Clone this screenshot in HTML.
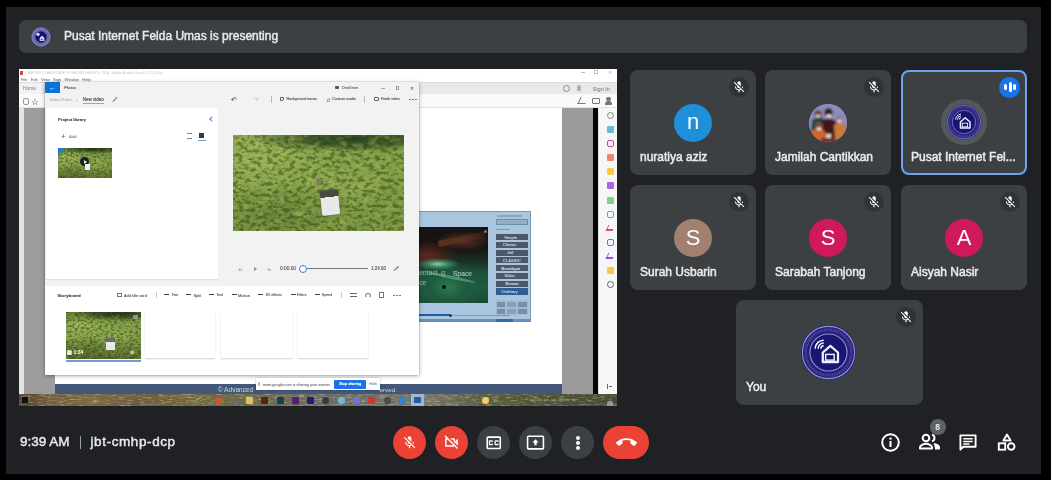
<!DOCTYPE html>
<html><head><meta charset="utf-8">
<style>
*{box-sizing:border-box;margin:0;padding:0}
html,body{width:1051px;height:480px;overflow:hidden;background:#000;font-family:"Liberation Sans",sans-serif}
body{filter:blur(0.4px)}
.abs{position:absolute}
#main{position:absolute;left:6px;top:7px;width:1035px;height:467px;background:#202124}
#banner{left:19px;top:20px;width:1008px;height:32.5px;background:#3c4043;border-radius:7px}
#banner .txt{left:64px;top:29px;color:#e8eaed;font-size:12px;font-weight:bold;letter-spacing:-0.38px;white-space:nowrap}
.tile{position:absolute;background:#3c4043;border-radius:8px;width:126px;height:105px}
.tile .nm{position:absolute;left:10px;top:80px;color:#e8eaed;font-size:12px;-webkit-text-stroke:0.5px #e8eaed;white-space:nowrap}
.tile .mute{position:absolute;right:7px;top:7px;width:20px;height:20px;border-radius:50%;background:#303336}.tile .mute svg{position:absolute;left:2.6px;top:3px}.btn .ic{position:absolute}
.av{position:absolute;left:44px;top:34px;width:38px;height:38px;border-radius:50%;color:#fff;font-size:22px;text-align:center;line-height:36px}
#share{left:19px;top:69px;width:598px;height:337px;background:#fff;overflow:hidden}
.btn{position:absolute;top:426px;width:33px;height:33px;border-radius:50%}
.vid{background:radial-gradient(ellipse 60% 14% at 70% 4%,#2a4220 0,rgba(42,66,32,.7) 50%,transparent 100%),radial-gradient(ellipse 45% 40% at 15% 25%,#9cb45a 0,transparent 100%),radial-gradient(ellipse 30% 25% at 65% 50%,#90aa50 0,transparent 100%),radial-gradient(ellipse 40% 35% at 25% 85%,#6a8638 0,transparent 100%),linear-gradient(170deg,#82a046 0,#86a24a 40%,#7a9642 100%)}
.card{background:#fff;box-shadow:0 1px 1.5px rgba(0,0,0,.18)}
.t{position:absolute;white-space:nowrap;line-height:1;-webkit-text-stroke:0.12px}
</style></head><body>
<div id="main"></div>
<div id="banner" class="abs">
</div>
<div class="abs" style="left:31px;top:26.5px"><svg viewBox="-30 -30 60 60" width="20" height="20"><circle r="29" fill="#6a68a8"/><circle r="26" fill="none" stroke="#a09ed4" stroke-width="4" stroke-dasharray="2 1.5" opacity=".6"/><circle r="17" fill="#15106a"/><path d="M-4 12V2l7-6 7 6v10z" fill="#d8d8f0"/><rect x="-1" y="5" width="7" height="5" fill="#6a68a8"/><circle cx="-9" cy="-8" r="5" fill="#e0e0f4"/></svg></div>
<div class="abs" style="left:64px;top:29px;color:#e8eaed;font-size:12px;letter-spacing:0px;-webkit-text-stroke:0.45px #e8eaed;white-space:nowrap">Pusat Internet Felda Umas is presenting</div>

<div id="share" class="abs"><div class="abs" style="left:-19px;top:-69px;width:1051px;height:480px">
<div class="abs" style="left:19px;top:69px;width:598px;height:13px;background:#fff"></div>
<div class="abs" style="left:19.5px;top:71px;width:3px;height:3.5px;background:#e0493a"></div>
<div class="t" style="left:25.4px;top:72.08px;font-size:3.3px;color:#c4c4c4;-webkit-text-stroke:0">CHAPTER 1 LANDSCAPE OF NATURE HEIGHTS - M.A. - Adobe Acrobat Reader DC (32-bit)</div>
<div class="t" style="left:20.8px;top:77.98px;font-size:4.05px;color:#8a8a8a;">File &nbsp; Edit &nbsp; View &nbsp; Sign &nbsp; Window &nbsp; Help</div>
<div class="abs" style="left:580.5px;top:72px;width:4px;height:0.8px;background:#c0c0c0"></div>
<div class="abs" style="left:594px;top:70px;width:4px;height:4px;border:1px solid #c0c0c0"></div>
<div class="t" style="left:608px;top:70.8px;font-size:4.5px;color:#c0c0c0;">&#10005;</div>
<div class="abs" style="left:19px;top:82px;width:598px;height:12px;background:#e9e9e9;border-top:1px solid #dcdcdc"></div>
<div class="abs" style="left:19px;top:82.5px;width:23px;height:11.5px;background:#f2f2f2"></div>
<div class="t" style="left:23px;top:86.65px;font-size:4.87px;color:#9a9a9a;">Home</div>
<div class="abs" style="left:562.5px;top:84.5px;width:7px;height:7px;border:1px solid #8a8a8a;border-radius:50%"></div>
<div class="abs" style="left:577px;top:85px;width:4px;height:6px;background:#b0b0b0;border-radius:2px 2px 1px 1px"></div>
<div class="t" style="left:592.6px;top:86.56px;font-size:5.59px;color:#8a8a8a;">Sign In</div>
<div class="abs" style="left:19px;top:94px;width:598px;height:14px;background:#fafafa;border-bottom:1px solid #e3e3e3"></div>
<div class="abs" style="left:22.5px;top:97.5px;width:6px;height:7px;border:1px solid #999;border-radius:2px"></div>
<div class="t" style="left:31px;top:98.0px;font-size:8.5px;color:#777;">&#9734;</div>
<div class="abs" style="left:579px;top:97px;width:8px;height:7px;border-bottom:1.3px solid #777;border-left:1.3px solid #777;transform:skewX(-25deg)"></div>
<div class="abs" style="left:592px;top:97.5px;width:8px;height:6.5px;border:1.2px solid #777;border-radius:1px"></div>
<div class="abs" style="left:606px;top:96.5px;width:4.5px;height:4.5px;background:#777;border-radius:50%"></div>
<div class="abs" style="left:604.5px;top:101px;width:7.5px;height:4px;background:#777;border-radius:3px 3px 0 0"></div>
<div class="abs" style="left:19px;top:108px;width:4.5px;height:286px;background:#e4e4e4"></div>
<div class="abs" style="left:23.5px;top:108px;width:31px;height:286px;background:#9d9d9d"></div>
<div class="abs" style="left:54.5px;top:108px;width:507px;height:286px;background:#fff"></div>
<div class="abs" style="left:561.5px;top:108px;width:31px;height:286px;background:#9b9b9b"></div>
<div class="abs" style="left:592.5px;top:108px;width:5px;height:286px;background:#050505"></div>
<div class="abs" style="left:597.5px;top:108px;width:20px;height:286px;background:#f6f6f6"></div>
<div class="abs" style="left:606.5px;top:111.5px;width:7px;height:7px;border:1.3px solid #888;border-radius:50%"></div>
<div class="abs" style="left:606.5px;top:125.5px;width:7px;height:7px;background:#4fb3c9;border-radius:1px;opacity:.85"></div>
<div class="abs" style="left:606.5px;top:139.5px;width:7px;height:7px;border:1.6px solid #d83da0;border-radius:2px"></div>
<div class="abs" style="left:606.5px;top:153.5px;width:7px;height:7px;background:#e8735a;border-radius:1px;opacity:.85"></div>
<div class="abs" style="left:606.5px;top:168.0px;width:7px;height:7px;background:#f2c42c;border-radius:1px;opacity:.85"></div>
<div class="abs" style="left:606.5px;top:182.0px;width:7px;height:7px;background:#9a4fe0;border-radius:1px;opacity:.85"></div>
<div class="abs" style="left:606.5px;top:196.5px;width:7px;height:7px;background:#6ccc6c;border-radius:1px;opacity:.85"></div>
<div class="abs" style="left:606.5px;top:210.5px;width:7px;height:7px;border:1.6px solid #3fb6c6;border-radius:2px"></div>
<div class="abs" style="left:606.5px;top:225px;width:7px;height:6px;border-bottom:2px solid #e04a8a;border-left:1.6px solid #e04a8a;transform:skewX(-25deg)"></div>
<div class="abs" style="left:606.5px;top:238.5px;width:7px;height:7px;border:1.6px solid #7a6ae8;border-radius:2px"></div>
<div class="abs" style="left:606.5px;top:253px;width:7px;height:6px;border-bottom:2px solid #a04ae8;border-left:1.6px solid #a04ae8;transform:skewX(-25deg)"></div>
<div class="abs" style="left:606.5px;top:266.5px;width:7px;height:7px;background:#f2c42c;border-radius:1px;opacity:.85"></div>
<div class="abs" style="left:606.5px;top:280.5px;width:7px;height:7px;border:1.3px solid #666;border-radius:50%"></div>
<div class="abs" style="left:607px;top:384px;width:1px;height:5px;background:#666"></div>
<div class="abs" style="left:609px;top:386px;width:3px;height:1px;background:#666"></div>
<div class="abs" style="left:597.5px;top:108px;width:1px;height:286px;background:#e6e6e6"></div>
<div class="abs" style="left:418px;top:211px;width:113px;height:111px;background:#a9c6de;border:1px solid #7a98b0"></div>
<div class="abs" style="left:418px;top:227px;width:70px;height:76px;background:radial-gradient(ellipse 22px 6px at 20px 37px,rgba(150,240,190,.85) 0,rgba(80,190,130,.5) 50%,transparent 100%),radial-gradient(ellipse 30px 14px at 10px 28px,rgba(110,40,30,.8) 0,transparent 100%),radial-gradient(ellipse 36px 26px at 30px 60px,#2a7a52 0,#1f5a40 50%,transparent 100%),radial-gradient(ellipse 28px 10px at 45px 14px,#5a2e22 0,transparent 100%),linear-gradient(#141414 0,#181614 30%,#1a3026 45%,#1f5038 60%,#1e5a3e 80%,#1c4a34 100%)"></div>
<div class="abs" style="left:438px;top:236px;width:48px;height:6px;background:linear-gradient(90deg,rgba(110,60,30,.7),rgba(90,40,25,.3));transform:rotate(-12deg)"></div>
<div class="abs" style="left:428px;top:276px;width:48px;height:3px;background:rgba(120,210,160,.45);border-radius:50%;transform:rotate(12deg)"></div>
<div class="t" style="left:419px;top:270.45px;font-size:6.88px;color:#8fb0a8;">entacl..g</div>
<div class="t" style="left:453px;top:270.52px;font-size:6.7px;color:#a9c4c4;">Space</div>
<div class="t" style="left:419.5px;top:279.95px;font-size:6.63px;color:#90a8a6;">ce</div>
<div class="abs" style="left:484px;top:230px;width:3px;height:3px;background:#777;border-radius:50%"></div>
<div class="abs" style="left:442px;top:285px;width:4px;height:4px;background:#111;border-radius:50%"></div>
<div class="abs" style="left:496px;top:233.5px;width:32px;height:62px;background:repeating-linear-gradient(#4c5966 0 6.2px,#a9c6de 6.2px 7.75px)"></div>
<div class="abs" style="left:496px;top:288px;width:32px;height:7px;background:#2e5e96"></div>
<div class="t" style="left:504.2px;top:235.52px;font-size:4.2px;color:#c8d4de;">Simple</div>
<div class="t" style="left:502.9px;top:243.27px;font-size:4.2px;color:#c8d4de;">Classic</div>
<div class="t" style="left:506.8px;top:251.02px;font-size:4.2px;color:#c8d4de;">Jeff</div>
<div class="t" style="left:502.9px;top:258.77px;font-size:4.2px;color:#c8d4de;">CLASSIC</div>
<div class="t" style="left:501.6px;top:266.52px;font-size:4.2px;color:#c8d4de;font-weight:bold">Bowtique</div>
<div class="t" style="left:504.2px;top:274.27px;font-size:4.2px;color:#c8d4de;">Slider</div>
<div class="t" style="left:505.5px;top:282.02px;font-size:4.2px;color:#c8d4de;font-weight:bold">Brown</div>
<div class="t" style="left:501.6px;top:289.77px;font-size:4.2px;color:#c8d4de;">Ordinary</div>
<div class="abs" style="left:497px;top:215px;width:25px;height:1.5px;background:#8aa6be"></div>
<div class="abs" style="left:496px;top:219px;width:32px;height:6px;background:#8fb0c8;border:1px solid #6f8fa6"></div>
<div class="abs" style="left:496px;top:228.5px;width:14px;height:1.5px;background:#7f98ac"></div>
<div class="abs" style="left:496px;top:300px;width:32px;height:15px;background:#a0bcd4"></div>
<div class="abs" style="left:497px;top:302px;width:8px;height:5px;background:#7890a4"></div>
<div class="abs" style="left:507px;top:302px;width:9px;height:5px;background:#8aa0b4"></div>
<div class="abs" style="left:518px;top:302px;width:9px;height:5px;background:#7890a4"></div>
<div class="abs" style="left:497px;top:309px;width:8px;height:5px;background:#7890a4"></div>
<div class="abs" style="left:507px;top:309px;width:9px;height:5px;background:#8aa0b4"></div>
<div class="abs" style="left:518px;top:309px;width:9px;height:5px;background:#7890a4"></div>
<div class="abs" style="left:418px;top:314.5px;width:92px;height:1px;background:#7f98b0"></div>
<div class="abs" style="left:418px;top:314px;width:32px;height:2px;background:#1f5aa8"></div>
<div class="abs" style="left:449px;top:314px;width:3px;height:3px;background:#1a3a6a;border-radius:50%"></div>
<div class="abs" style="left:418px;top:318.5px;width:113px;height:3.5px;background:#6a8fbd"></div>
<div class="abs" style="left:496px;top:318.5px;width:17px;height:3.5px;background:#2e6ab0"></div>
<div class="abs" style="left:45px;top:82px;width:374px;height:293px;background:#f2f2f2;box-shadow:0 1px 4px rgba(0,0,0,.35),0 0 1px rgba(0,0,0,.3)"></div>
<div class="abs" style="left:45px;top:82px;width:15px;height:10.5px;background:#0a74d6"></div>
<div class="t" style="left:49.5px;top:85.4px;font-size:6px;color:#fff;">&#8592;</div>
<div class="t" style="left:64.3px;top:87.06px;font-size:3.85px;color:#555;">Photos</div>
<div class="abs" style="left:335px;top:85.7px;width:4px;height:3.5px;background:#555;border-radius:1px"></div>
<div class="t" style="left:341.8px;top:86.66px;font-size:3.84px;color:#666;">OneDrive</div>
<div class="abs" style="left:381px;top:88px;width:4px;height:0.8px;background:#aaa"></div>
<div class="abs" style="left:395.5px;top:86px;width:3.5px;height:3.5px;border:0.8px solid #999"></div>
<div class="t" style="left:410px;top:86.4px;font-size:5px;color:#666;">&#10005;</div>
<div class="t" style="left:49.5px;top:97.88px;font-size:4.29px;color:#b8b8b8;">Video Editor</div>
<div class="t" style="left:76px;top:97.2px;font-size:6px;color:#bbb;">&#8250;</div>
<div class="t" style="left:82.8px;top:97.81px;font-size:4.48px;color:#444;">New video</div>
<div class="abs" style="left:83px;top:102.8px;width:21px;height:1px;background:#7ab0e0"></div>
<div class="abs" style="left:112px;top:98.5px;width:6px;height:1.3px;background:#777;transform:rotate(-45deg)"></div>
<div class="t" style="left:231px;top:96.2px;font-size:7px;color:#555;">&#8630;</div>
<div class="t" style="left:252.5px;top:96.2px;font-size:7px;color:#c8c8c8;">&#8631;</div>
<div class="abs" style="left:270.5px;top:95.5px;width:0.8px;height:7px;background:#b5b5b5"></div>
<div class="abs" style="left:279.5px;top:96.8px;width:4px;height:4px;border:1px solid #666;border-radius:0 0 50% 0"></div>
<div class="t" style="left:286.6px;top:97.92px;font-size:3.7px;color:#555;">Background music</div>
<div class="t" style="left:326px;top:97.0px;font-size:6px;color:#666;">&#9835;</div>
<div class="t" style="left:332.3px;top:97.86px;font-size:3.84px;color:#555;">Custom audio</div>
<div class="abs" style="left:364.2px;top:95.5px;width:0.8px;height:7px;background:#b5b5b5"></div>
<div class="abs" style="left:373.5px;top:96.8px;width:5px;height:4px;border:1px solid #666;border-radius:1px"></div>
<div class="t" style="left:380.8px;top:97.98px;font-size:3.56px;color:#555;">Finish video</div>
<div class="abs" style="left:409px;top:98.5px;width:10px;height:1.4px;background:repeating-linear-gradient(90deg,#777 0 1.6px,transparent 1.6px 3.2px)"></div>
<div class="abs" style="left:46px;top:108px;width:172px;height:171px;background:#fff;box-shadow:0 1px 1px rgba(0,0,0,.07)"></div>
<div class="t" style="left:58px;top:117.93px;font-size:4.18px;color:#444;font-weight:bold">Project library</div>
<div class="abs" style="left:210px;top:117px;width:4px;height:4px;border-left:1px solid #4a90d0;border-bottom:1px solid #4a90d0;transform:rotate(45deg)"></div>
<div class="t" style="left:61px;top:133.2px;font-size:8px;color:#666;">+</div>
<div class="t" style="left:69px;top:135.41px;font-size:4.22px;color:#888;">Add</div>
<div class="abs" style="left:187px;top:133px;width:5px;height:6px;border-top:1px solid #888;border-bottom:1px solid #888;background:linear-gradient(#fff 40%,#888 40% 60%,#fff 60%)"></div>
<div class="abs" style="left:199px;top:132.5px;width:5px;height:5px;background:#3a3a3a"></div>
<div class="abs" style="left:198px;top:140px;width:8px;height:1px;background:#6aa6da"></div>
<div class="abs vid" style="left:58px;top:148px;width:53.5px;height:30px;overflow:hidden"><svg width="53.5" height="30" style="position:absolute;left:0;top:0"><filter id="tg1" x="0" y="0" width="100%" height="100%" color-interpolation-filters="sRGB"><feTurbulence type="fractalNoise" baseFrequency="0.21 0.315" numOctaves="2" seed="9"/><feColorMatrix type="matrix" values="0 0 0 0 0.68  0 0 0 0 0.74  0 0 0 0 0.36  3 0 0 0 -1.5"/></filter><rect width="100%" height="100%" filter="url(#tg1)" opacity=".55"/><filter id="tf1" x="0" y="0" width="100%" height="100%" color-interpolation-filters="sRGB"><feTurbulence type="fractalNoise" baseFrequency="0.385 0.595" numOctaves="3" seed="4"/><feColorMatrix type="matrix" values="0 0 0 0 0.16  0 0 0 0 0.25  0 0 0 0 0.07  -4.5 0 0 0 2.45"/></filter><rect width="100%" height="100%" filter="url(#tf1)" opacity=".5"/></svg></div>
<div class="abs" style="left:58px;top:148px;width:53.5px;height:30px;background:linear-gradient(rgba(20,30,10,.3),rgba(0,0,0,0) 30%,rgba(0,0,0,0) 60%,rgba(40,35,10,.3))"></div>
<div class="abs" style="left:58px;top:148px;width:0px;height:0px;border-top:7px solid #1d7bd6;border-right:7px solid transparent"></div>
<div class="abs" style="left:80px;top:157px;width:9px;height:9px;border-radius:50%;background:#1e1e1e"></div>
<div class="abs" style="left:83.5px;top:159.5px;width:0px;height:0px;border-left:3px solid #eee;border-top:2px solid transparent;border-bottom:2px solid transparent"></div>
<div class="abs" style="left:85px;top:164px;width:5px;height:6px;background:#eee"></div>
<div class="abs vid" style="left:233px;top:134.5px;width:171px;height:96.5px;overflow:hidden"><svg width="171" height="96.5" style="position:absolute;left:0;top:0"><filter id="tg2" x="0" y="0" width="100%" height="100%" color-interpolation-filters="sRGB"><feTurbulence type="fractalNoise" baseFrequency="0.096 0.14400000000000002" numOctaves="2" seed="12"/><feColorMatrix type="matrix" values="0 0 0 0 0.68  0 0 0 0 0.74  0 0 0 0 0.36  3 0 0 0 -1.5"/></filter><rect width="100%" height="100%" filter="url(#tg2)" opacity=".55"/><filter id="tf2" x="0" y="0" width="100%" height="100%" color-interpolation-filters="sRGB"><feTurbulence type="fractalNoise" baseFrequency="0.17600000000000002 0.272" numOctaves="3" seed="7"/><feColorMatrix type="matrix" values="0 0 0 0 0.16  0 0 0 0 0.25  0 0 0 0 0.07  -4.5 0 0 0 2.45"/></filter><rect width="100%" height="100%" filter="url(#tf2)" opacity=".5"/></svg></div>
<div class="abs" style="left:321px;top:190px;width:18px;height:25px;background:linear-gradient(#4a4a3e 0 28%,#e8e8e8 28% 100%);border-radius:2px;transform:rotate(-6deg);box-shadow:0 0 2px rgba(0,0,0,.5)"></div>
<div class="abs" style="left:316px;top:178px;width:5px;height:7px;background:#8a7a62;border-radius:2px"></div>
<div class="t" style="left:238.5px;top:267.1px;font-size:5px;color:#888;">&#8249;&#8249;</div>
<div class="abs" style="left:253.5px;top:266.5px;width:0px;height:0px;border-left:3px solid #888;border-top:2px solid transparent;border-bottom:2px solid transparent"></div>
<div class="t" style="left:267.5px;top:267.1px;font-size:5px;color:#888;">&#8250;&#8250;</div>
<div class="t" style="left:280px;top:267.18px;font-size:4.8px;color:#555;">0:00.00</div>
<div class="abs" style="left:303px;top:268px;width:65px;height:1px;background:#777"></div>
<div class="abs" style="left:298.5px;top:264.5px;width:8px;height:8px;border-radius:50%;border:1.5px solid #3a86d0;background:#fff"></div>
<div class="t" style="left:371px;top:267.3px;font-size:4.5px;color:#555;">1:24.60</div>
<div class="abs" style="left:394px;top:265.5px;width:4px;height:1px;background:#888;transform:rotate(-45deg) translate(0,2px)"></div>
<div class="abs" style="left:393px;top:268px;width:6px;height:1px;background:#888;transform:rotate(-45deg)"></div>
<div class="abs" style="left:45px;top:286px;width:374px;height:89px;background:#fff"></div>
<div class="t" style="left:57.4px;top:293.84px;font-size:4.39px;color:#444;font-weight:bold">Storyboard</div>
<div class="abs" style="left:116.5px;top:292.5px;width:5px;height:4px;border:1px solid #777"></div>
<div class="t" style="left:124px;top:294.04px;font-size:3.91px;color:#5a5a5a;">Add title card</div>
<div class="abs" style="left:156px;top:292px;width:0.8px;height:6px;background:#ccc"></div>
<div class="abs" style="left:164px;top:294.2px;width:5px;height:1.3px;background:#444"></div>
<div class="t" style="left:171.5px;top:294.23px;font-size:3.42px;color:#5a5a5a;">Trim</div>
<div class="abs" style="left:185.5px;top:294.2px;width:5px;height:1.3px;background:#444"></div>
<div class="t" style="left:193.4px;top:294.04px;font-size:3.91px;color:#5a5a5a;">Split</div>
<div class="abs" style="left:208.5px;top:294.2px;width:5px;height:1.3px;background:#444"></div>
<div class="t" style="left:216.3px;top:294.14px;font-size:3.65px;color:#5a5a5a;">Text</div>
<div class="abs" style="left:231.5px;top:294.2px;width:5px;height:1.3px;background:#444"></div>
<div class="t" style="left:237.9px;top:294.0px;font-size:4.0px;color:#5a5a5a;">Motion</div>
<div class="abs" style="left:258px;top:294.2px;width:5px;height:1.3px;background:#444"></div>
<div class="t" style="left:265.6px;top:294.14px;font-size:3.64px;color:#5a5a5a;">3D effects</div>
<div class="abs" style="left:290.5px;top:294.2px;width:5px;height:1.3px;background:#444"></div>
<div class="t" style="left:297px;top:294.22px;font-size:3.45px;color:#5a5a5a;">Filters</div>
<div class="abs" style="left:314.5px;top:294.2px;width:5px;height:1.3px;background:#444"></div>
<div class="t" style="left:321.8px;top:294.18px;font-size:3.56px;color:#5a5a5a;">Speed</div>
<div class="abs" style="left:341px;top:292px;width:0.8px;height:6px;background:#ccc"></div>
<div class="abs" style="left:350px;top:292.5px;width:7px;height:4.5px;border-top:1px solid #666;border-bottom:1px solid #666;background:linear-gradient(#fff 40%,#666 40% 60%,#fff 60%)"></div>
<div class="abs" style="left:364.5px;top:292.5px;width:6px;height:5px;border:1px solid #777;border-radius:50%;border-bottom-color:transparent"></div>
<div class="abs" style="left:379px;top:292px;width:4.5px;height:6px;border:1px solid #777;border-top-width:1.5px"></div>
<div class="abs" style="left:393px;top:294.8px;width:10px;height:1.4px;background:repeating-linear-gradient(90deg,#777 0 1.6px,transparent 1.6px 3.2px)"></div>
<div class="abs vid" style="left:65.5px;top:312px;width:75px;height:46.5px;overflow:hidden"><svg width="75" height="46.5" style="position:absolute;left:0;top:0"><filter id="tg3" x="0" y="0" width="100%" height="100%" color-interpolation-filters="sRGB"><feTurbulence type="fractalNoise" baseFrequency="0.18 0.27" numOctaves="2" seed="14"/><feColorMatrix type="matrix" values="0 0 0 0 0.68  0 0 0 0 0.74  0 0 0 0 0.36  3 0 0 0 -1.5"/></filter><rect width="100%" height="100%" filter="url(#tg3)" opacity=".55"/><filter id="tf3" x="0" y="0" width="100%" height="100%" color-interpolation-filters="sRGB"><feTurbulence type="fractalNoise" baseFrequency="0.33 0.51" numOctaves="3" seed="9"/><feColorMatrix type="matrix" values="0 0 0 0 0.16  0 0 0 0 0.25  0 0 0 0 0.07  -4.5 0 0 0 2.45"/></filter><rect width="100%" height="100%" filter="url(#tf3)" opacity=".5"/></svg></div>
<div class="abs" style="left:65.5px;top:312px;width:75px;height:46.5px;background:linear-gradient(rgba(20,30,10,.35),rgba(0,0,0,0) 25%,rgba(0,0,0,0) 55%,rgba(40,35,10,.35))"></div>
<div class="abs" style="left:106px;top:338px;width:9px;height:12px;background:linear-gradient(#6a6a66 0 35%,#e8e8e8 35%)"></div>
<div class="abs" style="left:133px;top:315px;width:5px;height:4px;background:#9aa;opacity:.8"></div>
<div class="t" style="left:67px;top:350.1px;font-size:5px;color:#f0f0f0;font-weight:bold">&#9639; 1:34</div>
<div class="t" style="left:130px;top:350.1px;font-size:5px;color:#f0f0f0;">&#8858;</div>
<div class="abs" style="left:65.5px;top:359.5px;width:75px;height:2.2px;background:#6aa0d2"></div>
<div class="abs card" style="left:145px;top:312px;width:70px;height:46px"></div>
<div class="abs card" style="left:221px;top:312px;width:71px;height:46px"></div>
<div class="abs card" style="left:298px;top:312px;width:70px;height:46px"></div>
<div class="abs" style="left:54.5px;top:384px;width:507px;height:10px;background:#435779"></div>
<div class="t" style="left:217.8px;top:387.27px;font-size:6.58px;color:#d0d8e4;-webkit-text-stroke:0">&#169; Advanced</div>
<div class="t" style="left:379.6px;top:387.42px;font-size:6.19px;color:#d0d8e4;-webkit-text-stroke:0">erved.</div>
<div class="abs" style="left:255.5px;top:377.8px;width:124px;height:12.6px;background:#fff;box-shadow:0 0 2px rgba(0,0,0,.3)"></div>
<div class="abs" style="left:258px;top:382px;width:1.5px;height:4px;background:#bbb"></div>
<div class="t" style="left:262.8px;top:383.59px;font-size:3.78px;color:#777;">meet.google.com is sharing your screen.</div>
<div class="abs" style="left:334px;top:379.5px;width:31.5px;height:9.5px;background:#1a73e8;border-radius:1px"></div>
<div class="t" style="left:339.2px;top:383.36px;font-size:3.6px;color:#fff;font-weight:bold">Stop sharing</div>
<div class="t" style="left:369px;top:383.26px;font-size:3.84px;color:#6a9ae8;">Hide</div>
<div class="abs" style="left:19px;top:394px;width:598px;height:12.5px;background:linear-gradient(90deg,#4a3e2a 0,#6e5a3a 4%,#7e6a48 12%,#6c5c3e 20%,#76683e 28%,#6a6a44 34%,#6e6a56 42%,#6a6c6c 52%,#72706a 62%,#7a7870 68%,#5e6248 76%,#4e5438 86%,#424a32 100%)"></div>
<svg class="abs" style="left:19px;top:394px" width="598" height="12.5"><filter id="tbf" x="0" y="0" width="100%" height="100%"><feTurbulence type="fractalNoise" baseFrequency="0.15 0.6" numOctaves="3" seed="11"/><feColorMatrix type="matrix" values="0 0 0 0 0.85  0 0 0 0 0.78  0 0 0 0 0.6  2.4 0 0 0 -1.15"/></filter><rect width="100%" height="100%" filter="url(#tbf)" opacity=".5"/><filter id="tbg" x="0" y="0" width="100%" height="100%"><feTurbulence type="fractalNoise" baseFrequency="0.2 0.7" numOctaves="2" seed="3"/><feColorMatrix type="matrix" values="0 0 0 0 0.15  0 0 0 0 0.12  0 0 0 0 0.05  -2.5 0 0 0 1.3"/></filter><rect width="100%" height="100%" filter="url(#tbg)" opacity=".55"/></svg>
<div class="abs" style="left:22px;top:397px;width:6px;height:6px;background:#111"></div>
<div class="abs" style="left:195px;top:398px;width:8px;height:1.2px;background:rgba(200,220,180,.6);transform:rotate(-35deg)"></div>
<div class="abs" style="left:214.5px;top:396.5px;width:7px;height:7px;background:#d8502e;border-radius:50%"></div>
<div class="abs" style="left:230.5px;top:396.5px;width:7px;height:7px;background:#6a6a6a;border-radius:50%"></div>
<div class="abs" style="left:246.0px;top:396.5px;width:7px;height:7px;background:#e0c060;border-radius:1px"></div>
<div class="abs" style="left:261.0px;top:396.5px;width:7px;height:7px;background:#5a2210;border-radius:1px"></div>
<div class="abs" style="left:276.5px;top:396.5px;width:7px;height:7px;background:#10405a;border-radius:1px"></div>
<div class="abs" style="left:291.5px;top:396.5px;width:7px;height:7px;background:#502070;border-radius:1px"></div>
<div class="abs" style="left:307.0px;top:396.5px;width:7px;height:7px;background:#1e2070;border-radius:1px"></div>
<div class="abs" style="left:322.0px;top:396.5px;width:7px;height:7px;background:#3a3a3a;border-radius:50%"></div>
<div class="abs" style="left:337.5px;top:396.5px;width:7px;height:7px;background:#70bcd4;border-radius:50%"></div>
<div class="abs" style="left:352.5px;top:396.5px;width:7px;height:7px;background:#6a74d0;border-radius:2px"></div>
<div class="abs" style="left:368.0px;top:396.5px;width:7px;height:7px;background:#c83a28;border-radius:1px"></div>
<div class="abs" style="left:383.5px;top:396.5px;width:7px;height:7px;background:#4a4a4a;border-radius:50%"></div>
<div class="abs" style="left:399.0px;top:396.5px;width:7px;height:7px;background:#2a86d4;border-radius:2px"></div>
<div class="abs" style="left:411px;top:394px;width:13px;height:12.5px;background:#9fb8d4"></div>
<div class="abs" style="left:414px;top:397px;width:7px;height:6px;background:#2a5a9a"></div>
<div class="abs" style="left:481.5px;top:397px;width:7px;height:7px;border-radius:50%;background:#f0d060"></div>
<div class="abs" style="left:530px;top:399px;width:45px;height:2px;background:repeating-linear-gradient(90deg,rgba(200,200,190,.3) 0 5px,transparent 5px 7px)"></div>
<div class="abs" style="left:607px;top:401px;width:6px;height:6px;border-radius:50%;background:#9a9a9a"></div>
</div></div>
<div class="tile" style="left:630px;top:70px"><div class="mute"><svg viewBox="0 0 24 24" width="14" height="14"><path fill="#fff" d="M19 11h-1.7c0 .74-.16 1.43-.43 2.05l1.23 1.23c.56-.98.9-2.09.9-3.28zm-4.02.17c0-.06.02-.11.02-.17V5c0-1.66-1.34-3-3-3S9 3.34 9 5v.18l5.98 5.99zM4.27 3L3 4.27l6.01 6.01V11c0 1.66 1.33 3 2.99 3 .22 0 .44-.03.65-.08l1.66 1.66c-.71.33-1.5.52-2.31.52-2.76 0-5.3-2.1-5.3-5.1H5c0 3.41 2.72 6.23 6 6.72V21h2v-3.28c.91-.13 1.77-.45 2.54-.9L19.73 21 21 19.73 4.27 3z"/></svg></div><div class="av" style="background:#1e8fd8">n</div><div class="nm">nuratiya aziz</div></div>
<div class="tile" style="left:765px;top:70px"><div class="mute"><svg viewBox="0 0 24 24" width="14" height="14"><path fill="#fff" d="M19 11h-1.7c0 .74-.16 1.43-.43 2.05l1.23 1.23c.56-.98.9-2.09.9-3.28zm-4.02.17c0-.06.02-.11.02-.17V5c0-1.66-1.34-3-3-3S9 3.34 9 5v.18l5.98 5.99zM4.27 3L3 4.27l6.01 6.01V11c0 1.66 1.33 3 2.99 3 .22 0 .44-.03.65-.08l1.66 1.66c-.71.33-1.5.52-2.31.52-2.76 0-5.3-2.1-5.3-5.1H5c0 3.41 2.72 6.23 6 6.72V21h2v-3.28c.91-.13 1.77-.45 2.54-.9L19.73 21 21 19.73 4.27 3z"/></svg></div><div class="av" style="background:#8a88b6;overflow:hidden"><svg width="38" height="38" viewBox="0 0 38 38" style="position:absolute;left:0;top:0"><filter id="jb"><feGaussianBlur stdDeviation="0.9"/></filter><g filter="url(#jb)"><rect width="38" height="38" fill="#8e8cbc"/><rect x="0" y="26" width="38" height="12" fill="#7a5a6a"/><path d="M3 16q5-4 11-2v14H2z" fill="#1d4a3c"/><circle cx="9" cy="10" r="3.8" fill="#6a4a3a"/><rect x="7" y="11" width="4" height="2.3" fill="#ddd"/><path d="M11 17q8-5 16 0l3 21H9z" fill="#40141c"/><circle cx="19.5" cy="8.5" r="4.3" fill="#3a1a1e"/><rect x="17.5" y="10.5" width="4.5" height="2.8" fill="#e8e8e8"/><path d="M1 28q7-6 15-1l1 11H0z" fill="#d0682a"/><circle cx="10" cy="22" r="4" fill="#7a5040"/><rect x="7.8" y="23.5" width="4.5" height="2.5" fill="#e8e8e8"/><path d="M25 21q6-4 12 0v13l-11 2z" fill="#c87a3a"/><circle cx="30.5" cy="15" r="3.6" fill="#9a7a8a"/><rect x="28.5" y="16" width="4" height="2.3" fill="#ddd"/><rect x="17" y="30" width="5" height="4" fill="#d8d0c8"/><rect x="12" y="34" width="14" height="4" fill="#7a1a20"/></g></svg></div><div class="nm">Jamilah Cantikkan</div></div>
<div class="tile" style="left:901px;top:70px;border:2.5px solid #6ea2f2"><div class="abs" style="left:96px;top:4.5px;width:21px;height:21px;border-radius:50%;background:#1a73e8"></div><div class="abs" style="left:101px;top:11.5px;width:3px;height:6px;border-radius:2px;background:#fff"></div><div class="abs" style="left:105.5px;top:9.5px;width:3px;height:10px;border-radius:2px;background:#fff"></div><div class="abs" style="left:110px;top:11.5px;width:3px;height:6px;border-radius:2px;background:#fff"></div><div class="abs" style="left:38px;top:27px;width:46px;height:46px;border-radius:50%;background:#55585b"></div><div class="abs" style="left:43px;top:32px"><svg viewBox="-30 -30 60 60" width="36" height="36"><circle r="29" fill="#25207a"/><circle r="27.5" fill="none" stroke="#9390d8" stroke-width="1.2"/><circle r="24" fill="none" stroke="#a9a6e0" stroke-width="3" stroke-dasharray="1.5 1" opacity=".3"/><circle r="19.5" fill="#1a1570" stroke="#9390d8" stroke-width="1.2"/><path d="M-6 10V0l8-7 8 7v10z" fill="none" stroke="#f0f0ff" stroke-width="2.4" stroke-linejoin="round"/><rect x="-3" y="2" width="9" height="6" fill="none" stroke="#f0f0ff" stroke-width="1.5"/><path d="M-14-4a9 9 0 0 1 9-9M-11-4a6 6 0 0 1 6-6M-8-4a3 3 0 0 1 3-3" fill="none" stroke="#f0f0ff" stroke-width="1.6"/></svg></div><div class="nm" style="left:8px;top:78px">Pusat Internet Fel...</div></div>
<div class="tile" style="left:630px;top:185px"><div class="mute"><svg viewBox="0 0 24 24" width="14" height="14"><path fill="#fff" d="M19 11h-1.7c0 .74-.16 1.43-.43 2.05l1.23 1.23c.56-.98.9-2.09.9-3.28zm-4.02.17c0-.06.02-.11.02-.17V5c0-1.66-1.34-3-3-3S9 3.34 9 5v.18l5.98 5.99zM4.27 3L3 4.27l6.01 6.01V11c0 1.66 1.33 3 2.99 3 .22 0 .44-.03.65-.08l1.66 1.66c-.71.33-1.5.52-2.31.52-2.76 0-5.3-2.1-5.3-5.1H5c0 3.41 2.72 6.23 6 6.72V21h2v-3.28c.91-.13 1.77-.45 2.54-.9L19.73 21 21 19.73 4.27 3z"/></svg></div><div class="av" style="background:#a1806f;line-height:38.5px">S</div><div class="nm">Surah Usbarin</div></div>
<div class="tile" style="left:765px;top:185px"><div class="mute"><svg viewBox="0 0 24 24" width="14" height="14"><path fill="#fff" d="M19 11h-1.7c0 .74-.16 1.43-.43 2.05l1.23 1.23c.56-.98.9-2.09.9-3.28zm-4.02.17c0-.06.02-.11.02-.17V5c0-1.66-1.34-3-3-3S9 3.34 9 5v.18l5.98 5.99zM4.27 3L3 4.27l6.01 6.01V11c0 1.66 1.33 3 2.99 3 .22 0 .44-.03.65-.08l1.66 1.66c-.71.33-1.5.52-2.31.52-2.76 0-5.3-2.1-5.3-5.1H5c0 3.41 2.72 6.23 6 6.72V21h2v-3.28c.91-.13 1.77-.45 2.54-.9L19.73 21 21 19.73 4.27 3z"/></svg></div><div class="av" style="background:#d0195a;line-height:38.5px">S</div><div class="nm">Sarabah Tanjong</div></div>
<div class="tile" style="left:901px;top:185px"><div class="mute"><svg viewBox="0 0 24 24" width="14" height="14"><path fill="#fff" d="M19 11h-1.7c0 .74-.16 1.43-.43 2.05l1.23 1.23c.56-.98.9-2.09.9-3.28zm-4.02.17c0-.06.02-.11.02-.17V5c0-1.66-1.34-3-3-3S9 3.34 9 5v.18l5.98 5.99zM4.27 3L3 4.27l6.01 6.01V11c0 1.66 1.33 3 2.99 3 .22 0 .44-.03.65-.08l1.66 1.66c-.71.33-1.5.52-2.31.52-2.76 0-5.3-2.1-5.3-5.1H5c0 3.41 2.72 6.23 6 6.72V21h2v-3.28c.91-.13 1.77-.45 2.54-.9L19.73 21 21 19.73 4.27 3z"/></svg></div><div class="av" style="background:#d0195a;line-height:38.5px">A</div><div class="nm">Aisyah Nasir</div></div>
<div class="tile" style="left:736px;top:300px;width:187px"><div class="mute"><svg viewBox="0 0 24 24" width="14" height="14"><path fill="#fff" d="M19 11h-1.7c0 .74-.16 1.43-.43 2.05l1.23 1.23c.56-.98.9-2.09.9-3.28zm-4.02.17c0-.06.02-.11.02-.17V5c0-1.66-1.34-3-3-3S9 3.34 9 5v.18l5.98 5.99zM4.27 3L3 4.27l6.01 6.01V11c0 1.66 1.33 3 2.99 3 .22 0 .44-.03.65-.08l1.66 1.66c-.71.33-1.5.52-2.31.52-2.76 0-5.3-2.1-5.3-5.1H5c0 3.41 2.72 6.23 6 6.72V21h2v-3.28c.91-.13 1.77-.45 2.54-.9L19.73 21 21 19.73 4.27 3z"/></svg></div><div class="abs" style="left:64px;top:24px"><svg viewBox="-30 -30 60 60" width="57" height="57"><circle r="29" fill="#25207a"/><circle r="27.5" fill="none" stroke="#9390d8" stroke-width="1.2"/><circle r="24" fill="none" stroke="#a9a6e0" stroke-width="3" stroke-dasharray="1.5 1" opacity=".3"/><circle r="19.5" fill="#1a1570" stroke="#9390d8" stroke-width="1.2"/><path d="M-6 10V0l8-7 8 7v10z" fill="none" stroke="#f0f0ff" stroke-width="2.4" stroke-linejoin="round"/><rect x="-3" y="2" width="9" height="6" fill="none" stroke="#f0f0ff" stroke-width="1.5"/><path d="M-14-4a9 9 0 0 1 9-9M-11-4a6 6 0 0 1 6-6M-8-4a3 3 0 0 1 3-3" fill="none" stroke="#f0f0ff" stroke-width="1.6"/></svg></div><div class="nm">You</div></div>

<div class="abs" style="left:20px;top:434px;color:#e8eaed;font-size:13.5px;-webkit-text-stroke:0.45px #e8eaed;white-space:nowrap">9:39 AM</div>
<div class="abs" style="left:80px;top:436px;width:1px;height:13px;background:#9aa0a6"></div>
<div class="abs" style="left:90.5px;top:434px;color:#e8eaed;font-size:13.5px;letter-spacing:0.6px;-webkit-text-stroke:0.45px #e8eaed;white-space:nowrap">jbt-cmhp-dcp</div>

<div class="btn" style="left:393px;background:#ea4335"><svg class="ic" viewBox="0 0 24 24" width="15" height="15" style="left:9px;top:9px"><path fill="#fff" d="M19 11h-1.7c0 .74-.16 1.43-.43 2.05l1.23 1.23c.56-.98.9-2.09.9-3.28zm-4.02.17c0-.06.02-.11.02-.17V5c0-1.66-1.34-3-3-3S9 3.34 9 5v.18l5.98 5.99zM4.27 3L3 4.27l6.01 6.01V11c0 1.66 1.33 3 2.99 3 .22 0 .44-.03.65-.08l1.66 1.66c-.71.33-1.5.52-2.31.52-2.76 0-5.3-2.1-5.3-5.1H5c0 3.41 2.72 6.23 6 6.72V21h2v-3.28c.91-.13 1.77-.45 2.54-.9L19.73 21 21 19.73 4.27 3z"/></svg></div>
<div class="btn" style="left:435px;background:#ea4335"><svg class="ic" viewBox="0 0 24 24" width="17" height="17" style="left:8px;top:8px"><path fill="#fff" d="M9.56 8l-2-2-4.15-4.14L2 3.27 4.73 6H4c-.55 0-1 .45-1 1v10c0 .55.45 1 1 1h12c.21 0 .39-.08.55-.18L19.73 21l1.41-1.41-8.86-8.86L9.56 8zM5 16V8h1.73l8 8H5zm10-8v2.61l6 6V6.5l-4 4V7c0-.55-.45-1-1-1h-5.61l2 2H15z"/></svg></div>
<div class="btn" style="left:477px;background:#3c4043"><svg class="ic" viewBox="0 0 24 24" width="19.5" height="19.5" style="left:7px;top:6.8px"><path fill="#fff" d="M19 4H5a2 2 0 0 0-2 2v12a2 2 0 0 0 2 2h14c1.1 0 2-.9 2-2V6c0-1.1-.9-2-2-2zm0 14H5V6h14v12zM7 15h3c.55 0 1-.45 1-1v-1H9.5v.5h-2v-3h2v.5H11v-1c0-.55-.45-1-1-1H7c-.55 0-1 .45-1 1v4c0 .55.45 1 1 1zm7 0h3c.55 0 1-.45 1-1v-1h-1.5v.5h-2v-3h2v.5H18v-1c0-.55-.45-1-1-1h-3c-.55 0-1 .45-1 1v4c0 .55.45 1 1 1z"/></svg></div>
<div class="btn" style="left:519px;background:#3c4043"><svg class="ic" viewBox="0 0 24 24" width="19" height="19" style="left:7px;top:7px"><rect x="2" y="4" width="20" height="16" rx="1" fill="none" stroke="#fff" stroke-width="2"/><path d="M12 8l-4 4h2.5v3.5h3V12H16z" fill="#fff"/></svg></div>
<div class="btn" style="left:561px;background:#3c4043"><div class="abs" style="left:14.5px;top:9.5px;width:4px;height:4px;border-radius:50%;background:#fff"></div><div class="abs" style="left:14.5px;top:14.5px;width:4px;height:4px;border-radius:50%;background:#fff"></div><div class="abs" style="left:14.5px;top:19.5px;width:4px;height:4px;border-radius:50%;background:#fff"></div></div>
<div class="btn" style="left:603px;width:46px;border-radius:17px;background:#ea4335"><svg class="ic" viewBox="0 0 24 24" width="21" height="21" style="left:12.5px;top:5.5px"><path fill="#fff" d="M12 9c-1.6 0-3.15.25-4.6.72v3.1c0 .39-.23.74-.56.9-.98.49-1.87 1.12-2.66 1.85-.18.18-.43.28-.7.28-.28 0-.53-.11-.71-.29L.29 13.08c-.18-.17-.29-.42-.29-.7 0-.28.11-.53.29-.71C3.34 8.78 7.46 7 12 7s8.66 1.78 11.71 4.67c.18.18.29.43.29.71 0 .28-.11.53-.29.71l-2.48 2.48c-.18.18-.43.29-.71.29-.27 0-.52-.11-.7-.28-.79-.74-1.69-1.36-2.67-1.85-.33-.16-.56-.5-.56-.9v-3.1C15.15 9.25 13.6 9 12 9z"/></svg></div>

<svg class="abs" style="left:880px;top:432px" width="21" height="21" viewBox="0 0 21 21"><circle cx="10.5" cy="10.5" r="8.3" fill="none" stroke="#fff" stroke-width="2"/><rect x="9.5" y="9" width="2" height="6" fill="#fff"/><circle cx="10.5" cy="6.6" r="1.2" fill="#fff"/></svg>
<svg class="abs" style="left:919px;top:432.7px" width="22" height="17" viewBox="0 0 22 17"><circle cx="7" cy="5" r="3.3" fill="none" stroke="#fff" stroke-width="2"/><path d="M1 15.5v-1.2c0-2 3.5-3.5 6-3.5s6 1.5 6 3.5v1.2z" fill="none" stroke="#fff" stroke-width="2" stroke-linejoin="round"/><path d="M13 1.8a3.3 3.3 0 0 1 0 6.4" fill="none" stroke="#fff" stroke-width="2"/><path d="M15 11c2.3.5 5 1.6 5 3.3v1.2h-4" fill="#fff" stroke="#fff" stroke-width="2" stroke-linejoin="round"/></svg>
<div class="abs" style="left:929.7px;top:419.2px;width:16px;height:16px;border-radius:50%;background:#5f6368;color:#e8eaed;font-size:8.5px;font-weight:bold;text-align:center;line-height:16px">8</div>
<svg class="abs" style="left:957.5px;top:433.5px" width="20" height="18" viewBox="0 0 21 19"><path d="M2.5 1.5h16v12H5.5l-3 3z" fill="none" stroke="#fff" stroke-width="2" stroke-linejoin="round"/><path d="M5.5 5h10M5.5 7.8h10M5.5 10.6h6.5" stroke="#fff" stroke-width="1.6"/></svg>
<svg class="abs" style="left:997px;top:433px" width="20" height="19" viewBox="0 0 20 19"><path d="M10 1.5l3.6 6h-7.2z" fill="none" stroke="#fff" stroke-width="1.9" stroke-linejoin="round"/><rect x="1.8" y="10.3" width="6.4" height="6.4" fill="none" stroke="#fff" stroke-width="1.9"/><circle cx="14.2" cy="13.5" r="3.3" fill="none" stroke="#fff" stroke-width="1.9"/></svg>
</body></html>
